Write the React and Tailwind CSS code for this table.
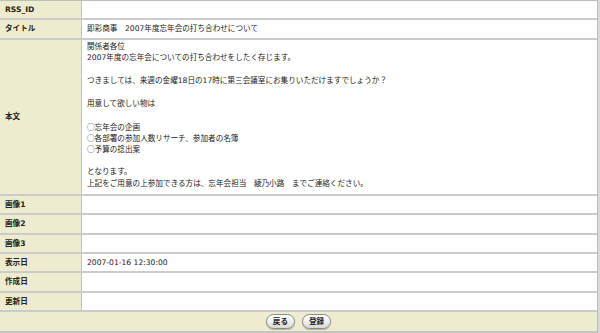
const rows = [
  { label: "RSS_ID", value: "" },
  { label: "タイトル", value: "即彩商事　2007年度忘年会の打ち合わせについて" },
];

const body = [
  "関係者各位",
  "2007年度の忘年会についての打ち合わせをしたく存じます。",
  "",
  "つきましては、来週の金曜18日の17時に第三会議室にお集りいただけますでしょうか？",
  "",
  "用意して欲しい物は",
  "",
  "○忘年会の企画",
  "○各部署の参加人数リサーチ、参加者の名簿",
  "○予算の捻出案",
  "",
  "となります。",
  "上記をご用意の上参加できる方は、忘年会担当　綾乃小路　までご連絡ください。",
];

const rest = [
  { label: "画像1", value: "" },
  { label: "画像2", value: "" },
  { label: "画像3", value: "" },
  { label: "表示日", value: "2007-01-16 12:30:00" },
  { label: "作成日", value: "" },
  { label: "更新日", value: "" },
];

const Row = ({ label, value }) => (
  <div className="flex h-[19.5px] border-b-2 border-[#cbcbcb]">
    <div className="w-[82px] shrink-0 border-r border-[#c0c0c0] bg-[#eeecce] pl-[5px] flex items-center font-bold">
      {label}
    </div>
    <div className="flex-1 bg-white pl-[5px] flex items-center">{value}</div>
  </div>
);

const Btn = ({ children }) => (
  <button className="h-[15px] px-[6px] rounded-full border border-[#8a8a8a] bg-gradient-to-b from-white via-[#f0f0f0] to-[#d6d6d6] text-[7.6px] font-bold leading-none text-[#222] shadow-[0_1px_1px_rgba(0,0,0,0.25)]">
    {children}
  </button>
);

// ○ comes from the CJK font so it's full width like the original
const Line = ({ text }) =>
  text.startsWith("○") ? (
    <>
      <span style={{ fontFamily: '"Noto Sans CJK JP", sans-serif' }}>○</span>
      {text.slice(1)}
    </>
  ) : (
    text
  );

export default function App() {
  return (
    <div
      className="w-[600px] h-[333px] flex bg-white text-[7.6px] text-[#222]"
      style={{ fontFamily: '"DejaVu Sans", "Noto Sans CJK JP", sans-serif' }}
    >
      <div className="flex-1 flex flex-col border-t border-r border-[#bdbdbd]">
        {rows.map((r) => (
          <Row key={r.label} {...r} />
        ))}
        <div className="flex border-b-2 border-[#cbcbcb]">
          <div className="w-[82px] shrink-0 border-r border-[#c0c0c0] bg-[#eeecce] pl-[5px] flex items-center font-bold">
            本文
          </div>
          <div className="flex-1 bg-white pl-[5px] pt-[1px] pb-[5px] leading-[11.42px]">
            {body.map((line, i) => (
              <div key={i} className="h-[11.42px]">
                <Line text={line} />
              </div>
            ))}
          </div>
        </div>
        {rest.map((r) => (
          <Row key={r.label} {...r} />
        ))}
        <div className="h-[21px] bg-[#eeecce] border-b-2 border-[#c4c4c4] flex items-center justify-center gap-[7px]">
          <Btn>戻る</Btn>
          <Btn>登録</Btn>
        </div>
      </div>
      <div className="w-[2px] bg-[#d9d9d9]" />
    </div>
  );
}
